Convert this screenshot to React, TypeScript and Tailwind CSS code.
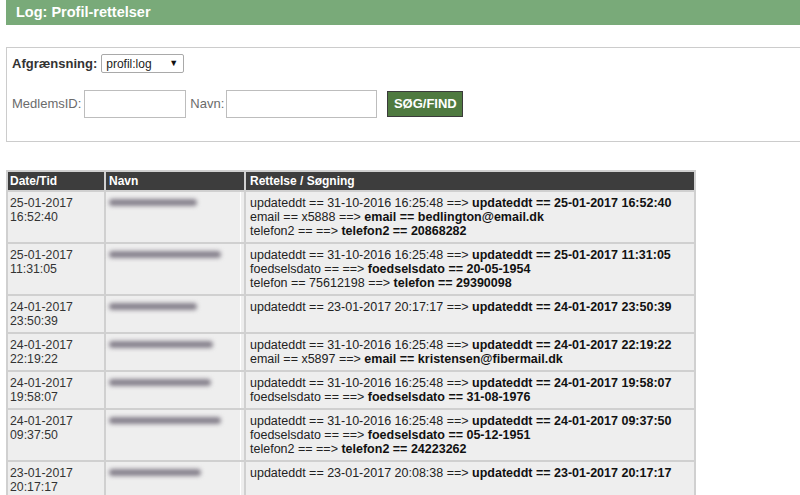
import React from "react";

type Part = { text: string; bold?: boolean };
type Row = { date: string; time: string; nameWidth: number; lines: Part[][] };

const rows: Row[] = [
  {
    date: "25-01-2017",
    time: "16:52:40",
    nameWidth: 88,
    lines: [
      [{ text: "updateddt == 31-10-2016 16:25:48 ==> " }, { text: "updateddt == 25-01-2017 16:52:40", bold: true }],
      [{ text: "email == x5888 ==> " }, { text: "email == bedlington@email.dk", bold: true }],
      [{ text: "telefon2 == ==> " }, { text: "telefon2 == 20868282", bold: true }],
    ],
  },
  {
    date: "25-01-2017",
    time: "11:31:05",
    nameWidth: 112,
    lines: [
      [{ text: "updateddt == 31-10-2016 16:25:48 ==> " }, { text: "updateddt == 25-01-2017 11:31:05", bold: true }],
      [{ text: "foedselsdato == ==> " }, { text: "foedselsdato == 20-05-1954", bold: true }],
      [{ text: "telefon == 75612198 ==> " }, { text: "telefon == 29390098", bold: true }],
    ],
  },
  {
    date: "24-01-2017",
    time: "23:50:39",
    nameWidth: 88,
    lines: [
      [{ text: "updateddt == 23-01-2017 20:17:17 ==> " }, { text: "updateddt == 24-01-2017 23:50:39", bold: true }],
    ],
  },
  {
    date: "24-01-2017",
    time: "22:19:22",
    nameWidth: 104,
    lines: [
      [{ text: "updateddt == 31-10-2016 16:25:48 ==> " }, { text: "updateddt == 24-01-2017 22:19:22", bold: true }],
      [{ text: "email == x5897 ==> " }, { text: "email == kristensen@fibermail.dk", bold: true }],
    ],
  },
  {
    date: "24-01-2017",
    time: "19:58:07",
    nameWidth: 102,
    lines: [
      [{ text: "updateddt == 31-10-2016 16:25:48 ==> " }, { text: "updateddt == 24-01-2017 19:58:07", bold: true }],
      [{ text: "foedselsdato == ==> " }, { text: "foedselsdato == 31-08-1976", bold: true }],
    ],
  },
  {
    date: "24-01-2017",
    time: "09:37:50",
    nameWidth: 112,
    lines: [
      [{ text: "updateddt == 31-10-2016 16:25:48 ==> " }, { text: "updateddt == 24-01-2017 09:37:50", bold: true }],
      [{ text: "foedselsdato == ==> " }, { text: "foedselsdato == 05-12-1951", bold: true }],
      [{ text: "telefon2 == ==> " }, { text: "telefon2 == 24223262", bold: true }],
    ],
  },
  {
    date: "23-01-2017",
    time: "20:17:17",
    nameWidth: 92,
    lines: [
      [{ text: "updateddt == 23-01-2017 20:08:38 ==> " }, { text: "updateddt == 23-01-2017 20:17:17", bold: true }],
    ],
  },
];

function SearchForm() {
  return (
    <div className="mt-[22px] border border-[#cccccc] pl-[5px] pt-[6px] pb-[23px] text-[13px]">
      <div className="flex items-center gap-[4px]">
        <span className="font-bold text-[#333]">Afgrænsning:</span>
        <div className="relative h-[19px] w-[83px]">
          <select
            className="h-full w-full appearance-none rounded-[2px] border border-[#a9a9a9] bg-white pl-[4px] text-[12px] text-[#222] outline-none"
            defaultValue="profil:log"
          >
            <option value="profil:log">profil:log</option>
          </select>
          <span className="pointer-events-none absolute right-[6px] top-[3px] text-[9px] text-[#111]">
            ▼
          </span>
        </div>
      </div>
      <div className="mt-[16px] flex items-center text-[#6b6b6b]">
        <span>MedlemsID:</span>
        <input
          className="ml-[3px] h-[28px] w-[102px] border border-[#bdbdbd] bg-white outline-none"
          type="text"
        />
        <span className="ml-[4px]">Navn:</span>
        <input
          className="ml-[2px] h-[28px] w-[151px] border border-[#bdbdbd] bg-white outline-none"
          type="text"
        />
        <button
          className="ml-[10px] h-[26px] w-[76px] border border-[#3b3b3b] bg-[#4f7a40] text-[13px] font-bold text-white"
          type="button"
        >
          SØG/FIND
        </button>
      </div>
    </div>
  );
}

function LogTable() {
  return (
    <table className="mt-[28px] w-[690px] table-fixed border-collapse text-[12px] leading-[14px] text-[#333]">
      <colgroup>
        <col className="w-[98px]" />
        <col className="w-[140px]" />
        <col />
      </colgroup>
      <thead>
        <tr className="bg-[#3d3d3d] text-left text-white">
          <th className="border-2 border-[#d0d0d0] px-[2px] py-[2px] font-bold">Date/Tid</th>
          <th className="border-2 border-[#d0d0d0] border-l-[#3d3d3d] px-[3px] py-[2px] font-bold">Navn</th>
          <th className="border-2 border-[#d0d0d0] border-l-[#3d3d3d] px-[4px] py-[2px] font-bold">Rettelse / Søgning</th>
        </tr>
      </thead>
      <tbody>
        {rows.map((row) => (
          <tr key={row.date + row.time} className="bg-[#eeeeee] align-top">
            <td className="border-2 border-[#d0d0d0] px-[2px] py-[4px] text-[12.3px]">
              {row.date}
              <br />
              {row.time}
            </td>
            <td className="border-2 border-[#d0d0d0] px-[3px] py-[4px] shadow-[inset_-3px_0_0_#eeeeee,inset_-4px_0_0_#ffffff]">
              <div
                className="mt-[3px] h-[7px] rounded-full bg-[#87828d] blur-[2px]"
                style={{ width: row.nameWidth }}
              />
            </td>
            <td className="border-2 border-[#d0d0d0] px-[4px] py-[4px] text-[12.5px] text-[#222]">
              {row.lines.map((line, i) => (
                <div key={i}>
                  {line.map((part, j) =>
                    part.bold ? (
                      <b key={j} className="font-bold text-[#111]">
                        {part.text}
                      </b>
                    ) : (
                      <span key={j}>{part.text}</span>
                    )
                  )}
                </div>
              ))}
            </td>
          </tr>
        ))}
      </tbody>
    </table>
  );
}

export default function App(): React.ReactElement {
  return (
    <div className="h-[495px] w-[800px] overflow-hidden bg-white font-['Liberation_Sans',Arial,sans-serif]">
      <div className="ml-[6px] w-[800px]">
        <div className="flex h-[25px] items-center bg-[#79aa79] pl-[10px] text-[14.5px] font-bold text-white">
          Log: Profil-rettelser
        </div>
        <SearchForm />
        <LogTable />
      </div>
    </div>
  );
}
